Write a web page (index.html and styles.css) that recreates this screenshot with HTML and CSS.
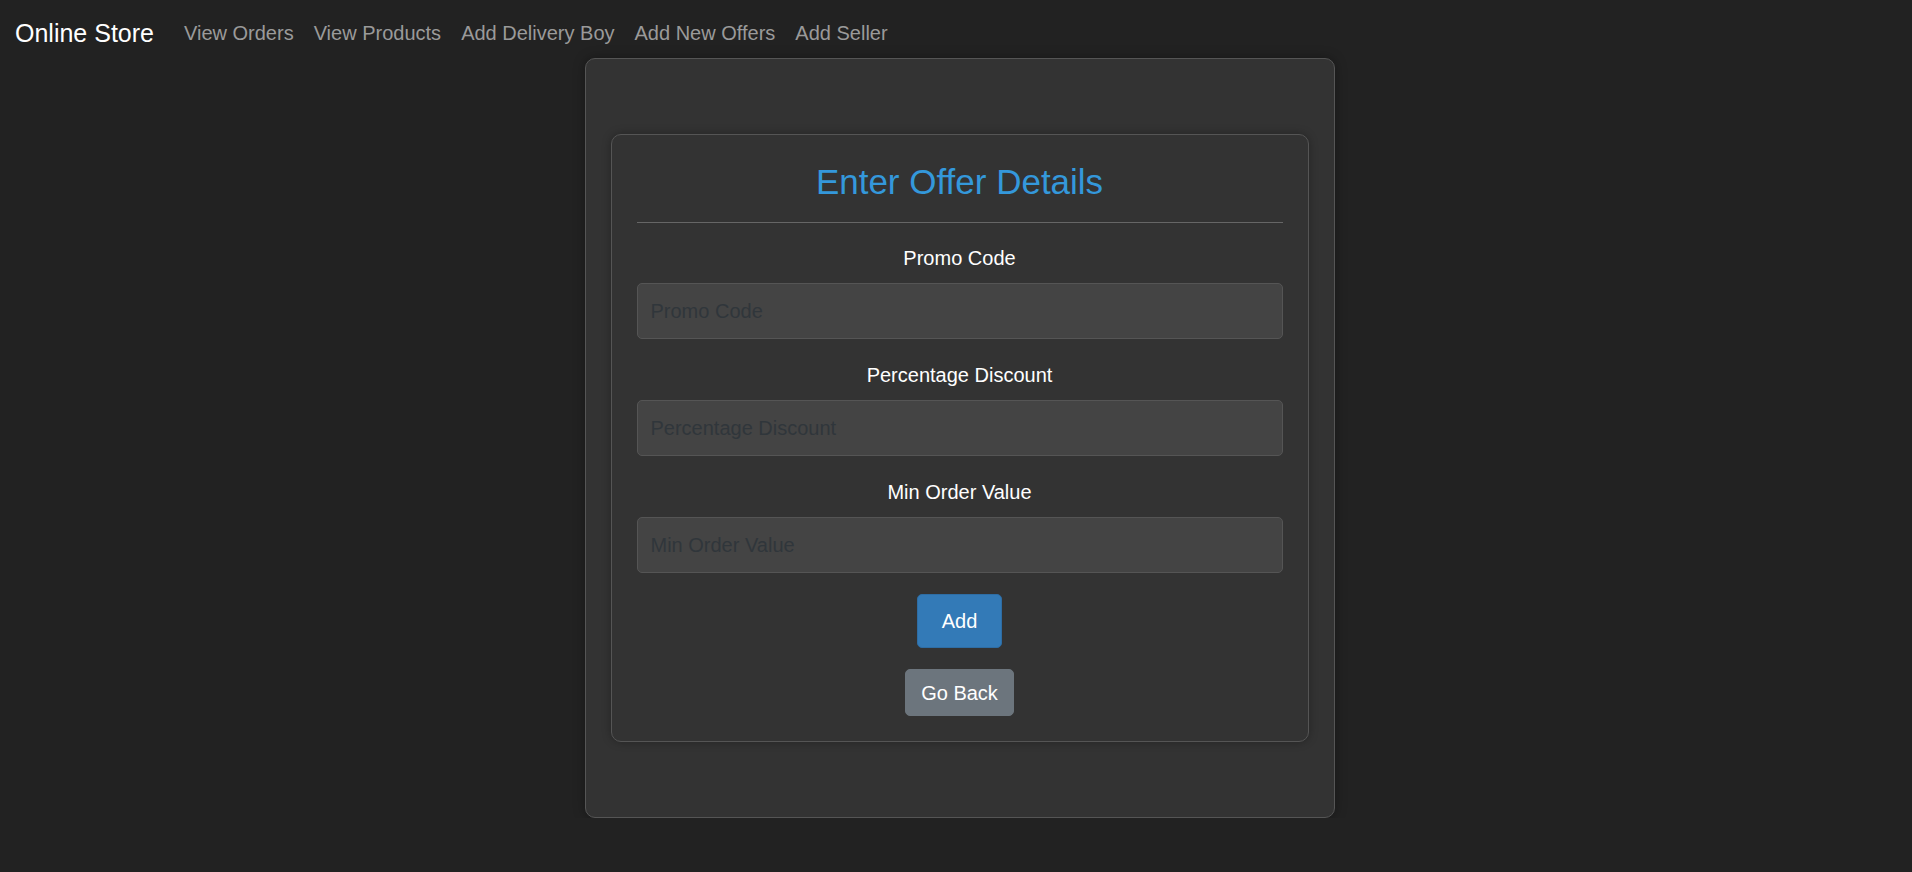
FILE: index.html
```html
<!DOCTYPE html>
<html lang="en">
<head>
<meta charset="utf-8">
<title>Online Store - Add New Offers</title>
<link rel="stylesheet" href="styles.css">
</head>
<body>
<nav class="navbar">
  <a class="brand" href="#">Online Store</a>
  <ul class="nav-links">
    <li><a class="nav-link" href="#">View Orders</a></li>
    <li><a class="nav-link" href="#">View Products</a></li>
    <li><a class="nav-link" href="#">Add Delivery Boy</a></li>
    <li><a class="nav-link" href="#">Add New Offers</a></li>
    <li><a class="nav-link" href="#">Add Seller</a></li>
  </ul>
</nav>
<main class="page">
  <div class="outer-card">
    <form class="inner-card">
      <h2 class="title">Enter Offer Details</h2>
      <hr class="divider">
      <div class="group">
        <label class="field-label" for="promo">Promo Code</label>
        <input class="field" id="promo" type="text" placeholder="Promo Code">
      </div>
      <div class="group">
        <label class="field-label" for="pct">Percentage Discount</label>
        <input class="field" id="pct" type="text" placeholder="Percentage Discount">
      </div>
      <div class="group">
        <label class="field-label" for="minv">Min Order Value</label>
        <input class="field" id="minv" type="text" placeholder="Min Order Value">
      </div>
      <div class="actions">
        <button class="btn btn-add" type="button">Add</button>
        <button class="btn btn-back" type="button">Go Back</button>
      </div>
    </form>
  </div>
</main>
</body>
</html>
```
FILE: styles.css
```css
html, body {
  margin: 0;
  padding: 0;
  background: #222222;
  font-family: "Liberation Sans", Arial, sans-serif;
}

.navbar {
  display: flex;
  align-items: flex-start;
  height: 58px;
  box-sizing: border-box;
  padding: 18px 15px 0;
}

.brand {
  font-size: 25px;
  line-height: 30px;
  color: #ffffff;
  text-decoration: none;
  margin-right: 20px;
}

.nav-links {
  display: flex;
  list-style: none;
  margin: 0;
  padding: 0;
}

.nav-link {
  display: block;
  font-size: 20px;
  line-height: 30px;
  padding: 0 10px;
  color: #9a9a9a;
  text-decoration: none;
}

.page {
  display: flex;
  justify-content: center;
  padding-left: 7px;
}

.outer-card {
  width: 750px;
  box-sizing: border-box;
  padding: 75px 25px;
  background: #333333;
  border: 1px solid #555555;
  border-radius: 10px;
  box-shadow: 0 0 12px rgba(0, 0, 0, 0.35);
}

.inner-card {
  margin: 0;
  padding: 25px;
  background: #333333;
  border: 1px solid #555555;
  border-radius: 10px;
  box-shadow: 0 0 10px rgba(0, 0, 0, 0.3);
  text-align: center;
}

.title {
  margin: 0 0 20px;
  padding-top: 1px;
  font-size: 35px;
  line-height: 41px;
  font-weight: normal;
  color: #3498db;
}

.divider {
  margin: 0 0 20px;
  border: 0;
  border-top: 1px solid #666666;
  height: 0;
}

.group {
  margin-bottom: 21px;
}

.field-label {
  display: block;
  font-size: 20px;
  line-height: 30px;
  color: #ffffff;
  margin-bottom: 10px;
}

.field {
  display: block;
  width: 100%;
  height: 56px;
  box-sizing: border-box;
  padding: 0 13px;
  font-family: inherit;
  font-size: 20px;
  color: #ffffff;
  background: #444444;
  border: 1px solid #555555;
  border-radius: 5px;
  outline: none;
}

.field::placeholder {
  color: #30363b;
  opacity: 1;
}

.actions {
  display: flex;
  flex-direction: column;
  align-items: center;
  gap: 21px;
}

.btn {
  font-family: inherit;
  font-size: 20px;
  line-height: 30px;
  color: #ffffff;
  border-radius: 5px;
  cursor: pointer;
}

.btn-add {
  padding: 11px 24px;
  background: #337ab7;
  border: 1px solid #2e6da4;
}

.btn-back {
  padding: 7.5px 15px;
  background: #6c757d;
  border: 1px solid #6c757d;
}
```
